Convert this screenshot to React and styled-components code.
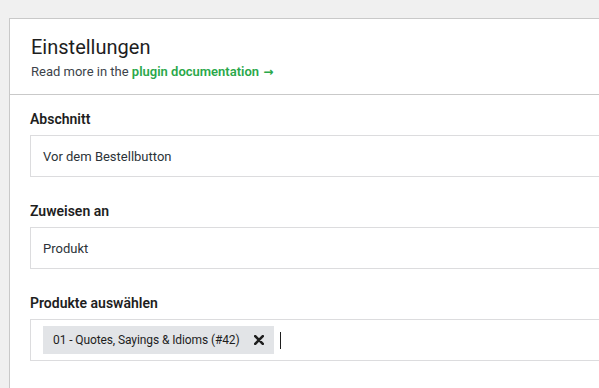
import styled, { createGlobalStyle } from "styled-components";

const GlobalStyle = createGlobalStyle`
  body {
    margin: 0;
    background: #f0f0f0;
    font-family: Roboto, "Liberation Sans", sans-serif;
    color: #1e1e1e;
    overflow: hidden;
  }
`;

const Page = styled.div`
  padding: 18px 0 0 9px;
  height: 370px;
  overflow: hidden;
`;

const Card = styled.div`
  width: 800px;
  background: #fff;
  border: 1px solid #c9c9c9;
  min-height: 400px;
`;

const Header = styled.div`
  padding: 15px 21px 13px;
  border-bottom: 1px solid #c9c9c9;
`;

const Title = styled.h1`
  margin: 0;
  font-size: 20px;
  line-height: 26px;
  font-weight: 400;
  color: #1e1e1e;
`;

const Subtitle = styled.p`
  margin: 3px 0 0;
  font-size: 13px;
  line-height: 18px;
  color: #3c434a;
`;

const DocLink = styled.a`
  color: #2aa84a;
  font-weight: 600;
  text-decoration: none;
`;

const Arrow = styled.span`
  font-family: "DejaVu Sans", sans-serif;
  font-weight: bold;
  font-size: 12px;
  margin-left: 1px;
`;

const Body = styled.div`
  padding: 14px 20px 0;
  display: flex;
  flex-direction: column;
  gap: 24px;
`;

const Field = styled.div`
  display: flex;
  flex-direction: column;
  gap: 6px;
`;

const Label = styled.label`
  font-size: 14px;
  line-height: 20px;
  font-weight: 600;
  color: #1e1e1e;
`;

const Box = styled.div`
  height: 40px;
  border: 1px solid #dcdcde;
  display: flex;
  align-items: center;
  padding: 0 12px;
  font-size: 13px;
  color: #2c3338;
`;

const Tag = styled.span`
  height: 28px;
  display: inline-flex;
  align-items: center;
  gap: 14px;
  padding: 0 10px;
  background: #e2e4e7;
  font-size: 12px;
  letter-spacing: -0.1px;
  color: #1e1e1e;
`;

const Caret = styled.span`
  width: 1px;
  height: 17px;
  margin-left: 6px;
  background: #1e1e1e;
`;

function CloseIcon() {
  return (
    <svg width="10" height="10" viewBox="0 0 10 10">
      <path d="M1.2 1.2 L8.8 8.8 M8.8 1.2 L1.2 8.8" stroke="#1e1e1e" strokeWidth="2.6" strokeLinecap="round" />
    </svg>
  );
}

export default function App() {
  return (
    <>
      <GlobalStyle />
      <Page>
        <Card>
          <Header>
            <Title>Einstellungen</Title>
            <Subtitle>
              Read more in the{" "}
              <DocLink href="#">
                plugin documentation <Arrow>→</Arrow>
              </DocLink>
            </Subtitle>
          </Header>
          <Body>
            <Field>
              <Label>Abschnitt</Label>
              <Box>Vor dem Bestellbutton</Box>
            </Field>
            <Field>
              <Label>Zuweisen an</Label>
              <Box>Produkt</Box>
            </Field>
            <Field>
              <Label>Produkte auswählen</Label>
              <Box>
                <Tag>
                  01 - Quotes, Sayings &amp; Idioms (#42)
                  <CloseIcon />
                </Tag>
                <Caret />
              </Box>
            </Field>
          </Body>
        </Card>
      </Page>
    </>
  );
}
